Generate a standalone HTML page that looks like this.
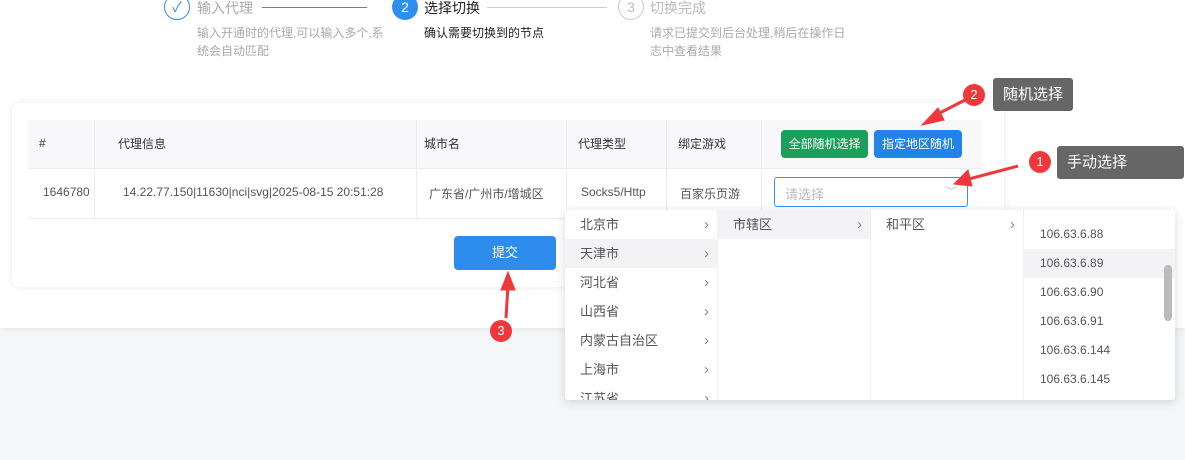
<!DOCTYPE html><html><head><meta charset="utf-8"><style>
*{box-sizing:border-box;margin:0;padding:0}
body{width:1185px;height:460px;overflow:hidden;background:#f5f6f8;font-family:"Liberation Sans","Noto Sans CJK SC",sans-serif;position:relative;color:#333}
.a{position:absolute}
.top{left:0;top:0;width:1185px;height:328px;background:#fff;box-shadow:0 2px 6px rgba(0,0,0,.06)}
.card{left:12px;top:103px;width:992px;height:184px;background:#fff;border-radius:8px;box-shadow:0 0 8px rgba(0,0,0,.08)}
.t{font-size:12px}
.th{background:#f8f8fa}
.vl{width:1px;background:#ebeef5}
.btn{border-radius:4px;color:#fff;font-size:12px;text-align:center;line-height:28px}
.dd{left:565px;top:210px;width:610px;height:190px;background:#fff;box-shadow:0 2px 10px rgba(0,0,0,.15);border-radius:3px;overflow:hidden}
.col{position:absolute;top:0;height:190px;width:153px;border-right:1px solid #eef0f4}
.it{height:29px;line-height:29px;padding-left:15px;font-size:13px;color:#555;position:relative}
.it .ar{position:absolute;right:8px;top:0;color:#888;font-size:15px}
.hl{background:#f3f3f5}
.tip{background:#666;color:#fff;font-size:15px;border-radius:3px;line-height:33px;padding:0 10px}
.red{width:22px;height:22px;border-radius:50%;background:#f0383c;color:#fff;font-size:13px;text-align:center;line-height:22px}
</style></head><body>
<div class="a top"></div>
<div class="a" style="left:164px;top:-6px;width:26px;height:26px;border:1px solid #2e8ff0;border-radius:50%;color:#2e8ff0;text-align:center;line-height:24px;font-size:14px">✓</div>
<div class="a" style="left:197px;top:-2px;font-size:14px;color:#aaa">输入代理</div>
<div class="a" style="left:262px;top:7px;width:105px;height:1px;background:#2e8ff0"></div>
<div class="a" style="left:392px;top:-6px;width:26px;height:26px;background:#2e8ff0;border-radius:50%;color:#fff;text-align:center;line-height:26px;font-size:14px">2</div>
<div class="a" style="left:424px;top:-2px;font-size:14px;color:#222">选择切换</div>
<div class="a" style="left:487px;top:7px;width:120px;height:1px;background:#ccc"></div>
<div class="a" style="left:618px;top:-6px;width:26px;height:26px;border:1px solid #ccc;border-radius:50%;color:#bbb;text-align:center;line-height:24px;font-size:14px">3</div>
<div class="a" style="left:650px;top:-2px;font-size:14px;color:#bbb">切换完成</div>
<div class="a" style="left:197px;top:24px;width:190px;font-size:12px;line-height:18px;color:#aaa">输入开通时的代理,可以输入多个,系统会自动匹配</div>
<div class="a" style="left:424px;top:24px;font-size:12px;line-height:18px;color:#222">确认需要切换到的节点</div>
<div class="a" style="left:650px;top:24px;width:200px;font-size:12px;line-height:18px;color:#aaa">请求已提交到后台处理,稍后在操作日志中查看结果</div>
<div class="a card"></div>
<div class="a th" style="left:28px;top:120px;width:954px;height:48px"></div>
<div class="a" style="left:28px;top:168px;width:954px;height:1px;background:#ebeef5"></div>
<div class="a" style="left:28px;top:218px;width:954px;height:1px;background:#ebeef5"></div>
<div class="a vl" style="left:94px;top:120px;height:98px"></div>
<div class="a vl" style="left:416px;top:120px;height:98px"></div>
<div class="a vl" style="left:566px;top:120px;height:98px"></div>
<div class="a vl" style="left:666px;top:120px;height:98px"></div>
<div class="a vl" style="left:761px;top:120px;height:98px"></div>
<div class="a t" style="left:39px;top:136px">#</div>
<div class="a t" style="left:118px;top:135px">代理信息</div>
<div class="a t" style="left:424px;top:135px">城市名</div>
<div class="a t" style="left:578px;top:135px">代理类型</div>
<div class="a t" style="left:678px;top:135px">绑定游戏</div>
<div class="a btn" style="left:781px;top:130px;width:87px;background:#1aa05a">全部随机选择</div>
<div class="a btn" style="left:874px;top:130px;width:88px;background:#2283eb">指定地区随机</div>
<div class="a t" style="left:43px;top:185px;color:#555">1646780</div>
<div class="a t" style="left:123px;top:185px;color:#555">14.22.77.150|11630|nci|svg|2025-08-15 20:51:28</div>
<div class="a t" style="left:429px;top:185px;color:#555">广东省/广州市/增城区</div>
<div class="a t" style="left:581px;top:185px;color:#555">Socks5/Http</div>
<div class="a t" style="left:680px;top:185px;color:#555">百家乐页游</div>
<div class="a" style="left:774px;top:177px;width:194px;height:30px;border:1px solid #3b8ff5;border-radius:3px;background:#fff"><span style="position:absolute;left:10px;top:6px;font-size:13px;color:#bbb">请选择</span><span style="position:absolute;right:10px;top:5px;font-size:11px;color:#bbb">﹀</span></div>
<div class="a btn" style="left:454px;top:236px;width:102px;height:34px;line-height:34px;background:#2d8cec;font-size:13px">提交</div>
<div class="a dd">
<div class="col" style="left:0">
<div class="it">北京市<span class="ar">›</span></div>
<div class="it hl">天津市<span class="ar">›</span></div>
<div class="it">河北省<span class="ar">›</span></div>
<div class="it">山西省<span class="ar">›</span></div>
<div class="it">内蒙古自治区<span class="ar">›</span></div>
<div class="it">上海市<span class="ar">›</span></div>
<div class="it">江苏省<span class="ar">›</span></div>
</div>
<div class="col" style="left:153px"><div class="it hl">市辖区<span class="ar">›</span></div></div>
<div class="col" style="left:306px"><div class="it">和平区<span class="ar">›</span></div></div>
<div class="col" style="left:459px;width:151px;border:none;padding-top:10px">
<div class="it" style="padding-left:16px;font-size:12px">106.63.6.88</div>
<div class="it hl" style="padding-left:16px;font-size:12px">106.63.6.89</div>
<div class="it" style="padding-left:16px;font-size:12px">106.63.6.90</div>
<div class="it" style="padding-left:16px;font-size:12px">106.63.6.91</div>
<div class="it" style="padding-left:16px;font-size:12px">106.63.6.144</div>
<div class="it" style="padding-left:16px;font-size:12px">106.63.6.145</div>
<div style="position:absolute;left:140px;top:55px;width:8px;height:56px;border-radius:4px;background:#bbb"></div>
</div>
</div>
<svg class="a" style="left:0;top:0" width="1185" height="460">
<g fill="#f0383c" stroke="#f0383c">
<line x1="965" y1="100" x2="930" y2="118" stroke-width="3"/><polygon points="922,125 938,108 944,120"/>
<line x1="1018" y1="166" x2="965" y2="180" stroke-width="3"/><polygon points="954,184 968,170 972,186"/>
<line x1="506" y1="318" x2="508" y2="285" stroke-width="3"/><polygon points="508,272 501,290 515,290"/>
</g></svg>
<div class="a red" style="left:963px;top:84px">2</div>
<div class="a tip" style="left:993px;top:78px">随机选择</div>
<div class="a red" style="left:1029px;top:151px">1</div>
<div class="a tip" style="left:1057px;top:146px;width:127px">手动选择</div>
<div class="a red" style="left:490px;top:320px">3</div>
</body></html>
